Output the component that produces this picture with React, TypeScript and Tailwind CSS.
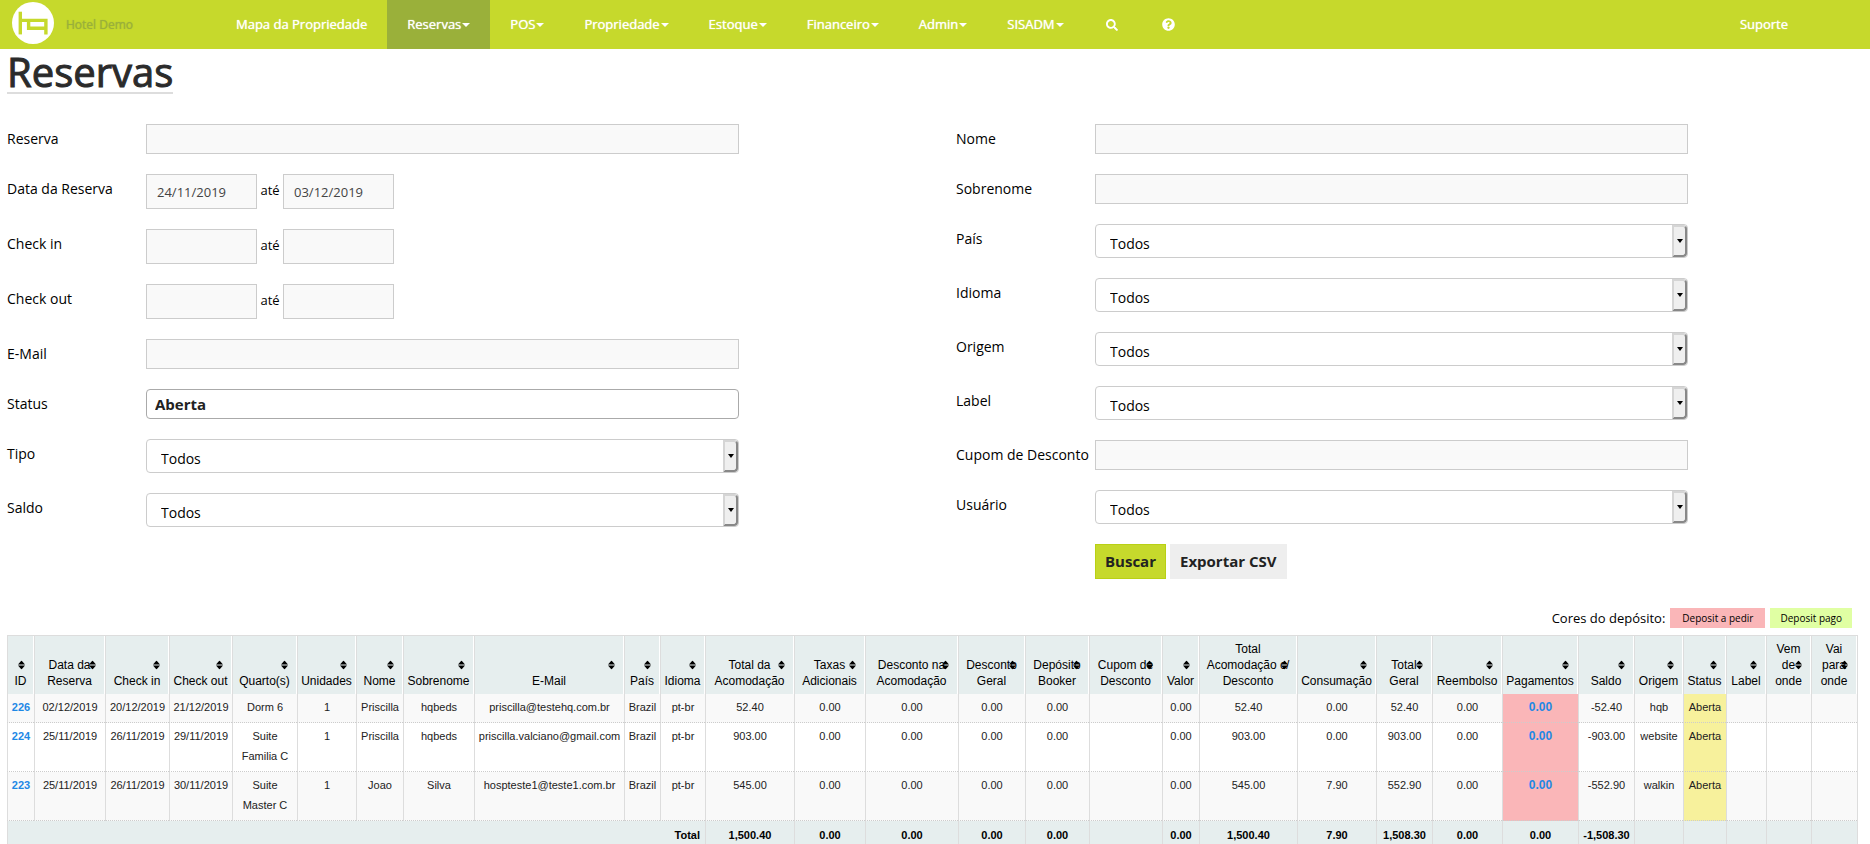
import { FaQuestionCircle, FaSearch } from 'react-icons/fa';
import { clsx } from 'clsx';

const navItems = [
    { label: 'Mapa da Propriedade', menu: false },
    { label: 'Reservas', menu: true, active: true },
    { label: 'POS', menu: true },
    { label: 'Propriedade', menu: true },
    { label: 'Estoque', menu: true },
    { label: 'Financeiro', menu: true },
    { label: 'Admin', menu: true },
    { label: 'SISADM', menu: true },
];

const columns = [
    { title: 'ID', width: 'w-[27px]' },
    { title: 'Data da\nReserva', width: 'w-[71px]' },
    { title: 'Check in', width: 'w-[64px]' },
    { title: 'Check out', width: 'w-[63px]' },
    { title: 'Quarto(s)', width: 'w-[65px]' },
    { title: 'Unidades', width: 'w-[59px]' },
    { title: 'Nome', width: 'w-[47px]' },
    { title: 'Sobrenome', width: 'w-[71px]' },
    { title: 'E-Mail', width: 'w-[150px]' },
    { title: 'País', width: 'w-[36px]' },
    { title: 'Idioma', width: 'w-[45px]' },
    { title: 'Total da\nAcomodação', width: 'w-[89px]' },
    { title: 'Taxas\nAdicionais', width: 'w-[71px]' },
    { title: 'Desconto na\nAcomodação', width: 'w-[93px]' },
    { title: 'Desconto\nGeral', width: 'w-[67px]' },
    { title: 'Depósito\nBooker', width: 'w-[64px]' },
    { title: 'Cupom de\nDesconto', width: 'w-[73px]' },
    { title: 'Valor', width: 'w-[37px]' },
    { title: 'Total\nAcomodação c/\nDesconto', width: 'w-[98px]' },
    { title: 'Consumação', width: 'w-[79px]' },
    { title: 'Total\nGeral', width: 'w-[56px]' },
    { title: 'Reembolso', width: 'w-[70px]' },
    { title: 'Pagamentos', width: 'w-[76px]' },
    { title: 'Saldo', width: 'w-[56px]' },
    { title: 'Origem', width: 'w-[49px]' },
    { title: 'Status', width: 'w-[43px]' },
    { title: 'Label', width: 'w-[40px]' },
    { title: 'Vem\nde\nonde', width: 'w-[45px]' },
    { title: 'Vai\npara\nonde', width: 'w-[46px]' },
];

const PAYMENTS_COL = 22;
const STATUS_COL = 25;

const bookings = [
    ['226', '02/12/2019', '20/12/2019', '21/12/2019', 'Dorm 6', '1', 'Priscilla', 'hqbeds', 'priscilla@testehq.com.br', 'Brazil', 'pt-br', '52.40', '0.00', '0.00', '0.00', '0.00', '', '0.00', '52.40', '0.00', '52.40', '0.00', '0.00', '-52.40', 'hqb', 'Aberta', '', '', ''],
    ['224', '25/11/2019', '26/11/2019', '29/11/2019', 'Suite\nFamilia C', '1', 'Priscilla', 'hqbeds', 'priscilla.valciano@gmail.com', 'Brazil', 'pt-br', '903.00', '0.00', '0.00', '0.00', '0.00', '', '0.00', '903.00', '0.00', '903.00', '0.00', '0.00', '-903.00', 'website', 'Aberta', '', '', ''],
    ['223', '25/11/2019', '26/11/2019', '30/11/2019', 'Suite\nMaster C', '1', 'Joao', 'Silva', 'hospteste1@teste1.com.br', 'Brazil', 'pt-br', '545.00', '0.00', '0.00', '0.00', '0.00', '', '0.00', '545.00', '7.90', '552.90', '0.00', '0.00', '-552.90', 'walkin', 'Aberta', '', '', ''],
];

const totals = ['1,500.40', '0.00', '0.00', '0.00', '0.00', '', '0.00', '1,500.40', '7.90', '1,508.30', '0.00', '0.00', '-1,508.30', '', '', '', '', ''];

function Logo() {
    return (
        <svg viewBox="0 0 42 42" className="mb-1 h-[42px] w-[42px]" aria-hidden="true">
            <circle cx="21" cy="21" r="21" fill="#fff" />
            <g fill="none" stroke="#c6d92c" strokeWidth="3.4">
                <path d="M8.3 9.7v22.7" />
                <path d="M8.3 18.4h25.6v14" />
                <path d="M16.6 18.4v7.8h17.3" />
            </g>
        </svg>
    );
}

function Caret() {
    return (
        <svg viewBox="0 0 8 4" className="ml-px h-1 w-2" aria-hidden="true">
            <path d="M0 0h8L4 4z" fill="currentColor" />
        </svg>
    );
}

function SortIcon() {
    return (
        <svg viewBox="0 0 7 9" className="absolute top-1/2 right-2 h-[9px] w-[7px] -translate-y-1/2" aria-hidden="true">
            <path d="M3.5 0 7 4H0zM3.5 9 7 5H0z" fill="#000" />
        </svg>
    );
}

function Navbar() {
    return (
        <nav className="flex h-[49px] items-stretch bg-[#c6d92c] text-[13px] font-medium text-white [text-shadow:0_0_1px_currentColor]">
            <a href="#" className="flex w-[216px] items-center pl-3 text-xs text-[#9ab03a]">
                <Logo />
                <span className="ml-3">Hotel Demo</span>
            </a>
            {navItems.map((item) => (
                <a
                    key={item.label}
                    href="#"
                    className={clsx('flex items-center px-5', item.active && 'bg-[#9ab03a]')}
                >
                    {item.label}
                    {item.menu && <Caret />}
                </a>
            ))}
            <a href="#" aria-label="Pesquisar" className="flex items-center px-[22px]">
                <FaSearch className="h-3 w-3" />
            </a>
            <a href="#" aria-label="Ajuda" className="flex items-center px-[22px]">
                <FaQuestionCircle className="h-[13px] w-[13px]" />
            </a>
            <a href="#" className="mr-[62px] ml-auto flex items-center px-5">Suporte</a>
        </nav>
    );
}

function Field({ id, label, children }: { id: string; label: string; children: React.ReactNode }) {
    return (
        <div className="flex items-start">
            <label htmlFor={id} className="w-[139px] shrink-0 leading-[30px]">{label}</label>
            <div className="max-w-[593px] flex-1">{children}</div>
        </div>
    );
}

function TextField({ id, label }: { id: string; label: string }) {
    return (
        <Field id={id} label={label}>
            <input id={id} type="text" className="block h-[30px] w-full border border-[#ccc] bg-[#f9f9f9] px-2.5" />
        </Field>
    );
}

function DateRange({ id, label, from = '', to = '' }: { id: string; label: string; from?: string; to?: string }) {
    const input = 'h-[35px] w-[111px] border border-[#ccc] bg-[#f9f9f9] px-2.5 text-[13px] text-[#444]';
    return (
        <Field id={id} label={label}>
            <div className="flex">
                <input id={id} type="text" defaultValue={from} className={input} />
                <label htmlFor={`${id}-ate`} className="w-[26px] text-center text-[13px] leading-8">até</label>
                <input id={`${id}-ate`} type="text" defaultValue={to} className={input} />
            </div>
        </Field>
    );
}

function SelectField({ id, label }: { id: string; label: string }) {
    return (
        <Field id={id} label={label}>
            <div className="relative">
                <select id={id} className="block h-[34px] w-full appearance-none rounded-sm border border-[#ccc] bg-white px-3.5 pt-1.5 text-sm">
                    <option>Todos</option>
                </select>
                <span className="pointer-events-none absolute inset-y-px right-px flex w-[15px] items-center justify-center rounded-r-sm border-2 border-t-[#d5d5d5] border-r-[#888] border-b-[#888] border-l-[#d5d5d5] bg-[#efefef]">
                    <svg viewBox="0 0 6 4" className="h-1 w-1.5" aria-hidden="true">
                        <path d="M0 0h6L3 4z" fill="#000" />
                    </svg>
                </span>
            </div>
        </Field>
    );
}

function Filters() {
    return (
        <form className="mt-[30px] grid grid-cols-[949fr_901fr] text-sm text-black" onSubmit={(e) => e.preventDefault()}>
            <div className="flex flex-col gap-5">
                <TextField id="reserva" label="Reserva" />
                <DateRange id="data-reserva" label="Data da Reserva" from="24/11/2019" to="03/12/2019" />
                <DateRange id="check-in" label="Check in" />
                <DateRange id="check-out" label="Check out" />
                <TextField id="email" label="E-Mail" />
                <Field id="status" label="Status">
                    <input
                        id="status"
                        type="text"
                        defaultValue="Aberta"
                        className="block h-[30px] w-full rounded-sm border border-[#aaa] bg-white px-2 text-[15px] font-bold text-[#222]"
                    />
                </Field>
                <SelectField id="tipo" label="Tipo" />
                <SelectField id="saldo" label="Saldo" />
            </div>
            <div className="flex flex-col gap-5">
                <TextField id="nome" label="Nome" />
                <TextField id="sobrenome" label="Sobrenome" />
                <SelectField id="pais" label="País" />
                <SelectField id="idioma" label="Idioma" />
                <SelectField id="origem" label="Origem" />
                <SelectField id="label" label="Label" />
                <TextField id="cupom" label="Cupom de Desconto" />
                <SelectField id="usuario" label="Usuário" />
                <div className="flex gap-1 pl-[139px] text-[15px] font-bold text-[#222]">
                    <button type="submit" className="h-[35px] border border-[#b9d015] bg-[#c6d92c] px-[9px]">Buscar</button>
                    <button type="button" className="h-[35px] bg-[#eee] px-2.5">Exportar CSV</button>
                </div>
            </div>
        </form>
    );
}

function BookingsTable() {
    return (
        <table className="w-full table-fixed border-separate border-spacing-0 border-t border-r border-[#ddd] text-center font-['Liberation_Sans',Arial,sans-serif] text-[11px] leading-5 text-[#222]">
            <colgroup>
                {columns.map((col) => (
                    <col key={col.title} className={col.width} />
                ))}
            </colgroup>
            <thead>
                <tr className="h-[58px] text-xs leading-4 text-black">
                    {columns.map((col) => (
                        <th
                            key={col.title}
                            className="relative border-r border-l border-r-white border-l-[#ddd] bg-[#e6eeee] pb-[5px] align-bottom font-normal whitespace-pre"
                        >
                            <span className="flex justify-center">{col.title}</span>
                            <SortIcon />
                        </th>
                    ))}
                </tr>
            </thead>
            <tbody>
                {bookings.map((row) => (
                    <tr key={row[0]} className="odd:bg-[#f9f9f9]">
                        {row.map((value, i) => (
                            <td
                                key={i}
                                className={clsx(
                                    'border-b border-l border-b-[#ccc] border-l-[#ddd] pt-[3px] pb-[5px] align-top whitespace-pre [border-bottom-style:dotted]',
                                    i === PAYMENTS_COL && 'bg-[#fab6b8] text-xs leading-5 font-bold',
                                    i === STATUS_COL && 'bg-[#f7f19c]',
                                )}
                            >
                                {i === 0 || i === PAYMENTS_COL ? (
                                    <a href="#" className="font-bold text-[#1e88e5]">{value}</a>
                                ) : (
                                    value
                                )}
                            </td>
                        ))}
                    </tr>
                ))}
            </tbody>
            <tfoot>
                <tr className="bg-[#e6eeee] font-bold text-black">
                    <td colSpan={11} className="border-l border-[#ddd] py-1 pr-[5px] text-right">Total</td>
                    {totals.map((value, i) => (
                        <td key={i} className="border-l border-[#ddd] py-1">{value}</td>
                    ))}
                </tr>
            </tfoot>
        </table>
    );
}

export default function App() {
    return (
        <div className="bg-white font-['Open_Sans',sans-serif]">
            <Navbar />
            <main className="pr-[13px] pl-[7px]">
                <h1 className="inline-block border-b-2 border-[#ddd] pt-0.5 text-[40px] leading-[41px] font-medium text-[#2b2b2b] [-webkit-text-stroke:1px_#2b2b2b]">Reservas</h1>
                <Filters />
                <div className="mt-[29px] mb-[7px] flex items-center justify-end gap-[5px] pr-[5px] text-[10px] leading-5 text-black">
                    <span className="text-[13px]">Cores do depósito:</span>
                    <span className="bg-[#fab6b8] px-3">Deposit a pedir</span>
                    <span className="bg-[#e0ffa3] px-2.5">Deposit pago</span>
                </div>
                <BookingsTable />
            </main>
        </div>
    );
}
